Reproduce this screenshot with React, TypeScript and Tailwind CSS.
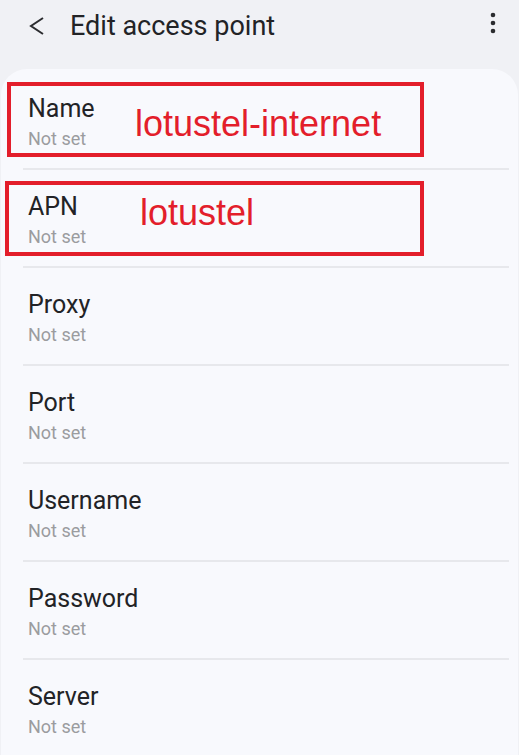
import React from 'react';

const fields = ['Name', 'APN', 'Proxy', 'Port', 'Username', 'Password', 'Server'];

const redFont = { fontFamily: '"Liberation Sans", Arial, sans-serif' };

function Row({ label, last }: { label: string; last: boolean }) {
  return (
    <div>
      <div className="h-[96px] pl-[27px] pt-[23px]">
        <div className="text-[25px] leading-[28px] text-[#222326]">{label}</div>
        <div className="mt-[5px] text-[18px] leading-[22px] text-[#9b9c9f]">Not set</div>
      </div>
      {!last && <div className="ml-[22px] mr-[9px] h-[2px] bg-[#e7e8ec]" />}
    </div>
  );
}

export default function App() {
  return (
    <div
      className="h-[755px] w-[519px] overflow-hidden bg-[#f0f1f5]"
      style={{ fontFamily: 'Roboto, "Noto Sans", sans-serif' }}
    >
      {/* header */}
      <div className="flex h-[69px] items-start pt-[10px]">
        <svg className="ml-[29px] mt-[7px]" width="16" height="18" viewBox="0 0 16 18" fill="none">
          <path d="M14 1 L2 9 L14 17" stroke="#2b2c2f" strokeWidth="2" strokeLinejoin="miter" />
        </svg>
        <div className="ml-[25px] text-[27px] leading-[32px] text-[#222326]">Edit access point</div>
        <svg className="ml-auto mr-[22px] mt-[1px]" width="8" height="26" viewBox="0 0 8 26">
          <circle cx="4" cy="4" r="2.3" fill="#2b2c2f" />
          <circle cx="4" cy="12" r="2.3" fill="#2b2c2f" />
          <circle cx="4" cy="20" r="2.3" fill="#2b2c2f" />
        </svg>
      </div>

      {/* list card */}
      <div className="relative mx-[1px] rounded-t-[26px] bg-[#f8f9fd] pt-[3px]">
        {fields.map((f, i) => (
          <Row key={f} label={f} last={i === fields.length - 1} />
        ))}

        {/* red annotations drawn over the list */}
        <div
          className="absolute left-[6px] top-[13px] h-[75px] w-[417px] border-[4px] border-[#e31e2b] pl-[124px] pt-[20px] text-[36px] leading-[36px] text-[#e31e2b]"
          style={redFont}
        >
          lotustel-internet
        </div>
        <div
          className="absolute left-[4px] top-[112px] h-[75px] w-[419px] border-[4px] border-[#e31e2b] pl-[131px] pt-[10px] text-[36px] leading-[36px] text-[#e31e2b]"
          style={redFont}
        >
          lotustel
        </div>
      </div>
    </div>
  );
}
